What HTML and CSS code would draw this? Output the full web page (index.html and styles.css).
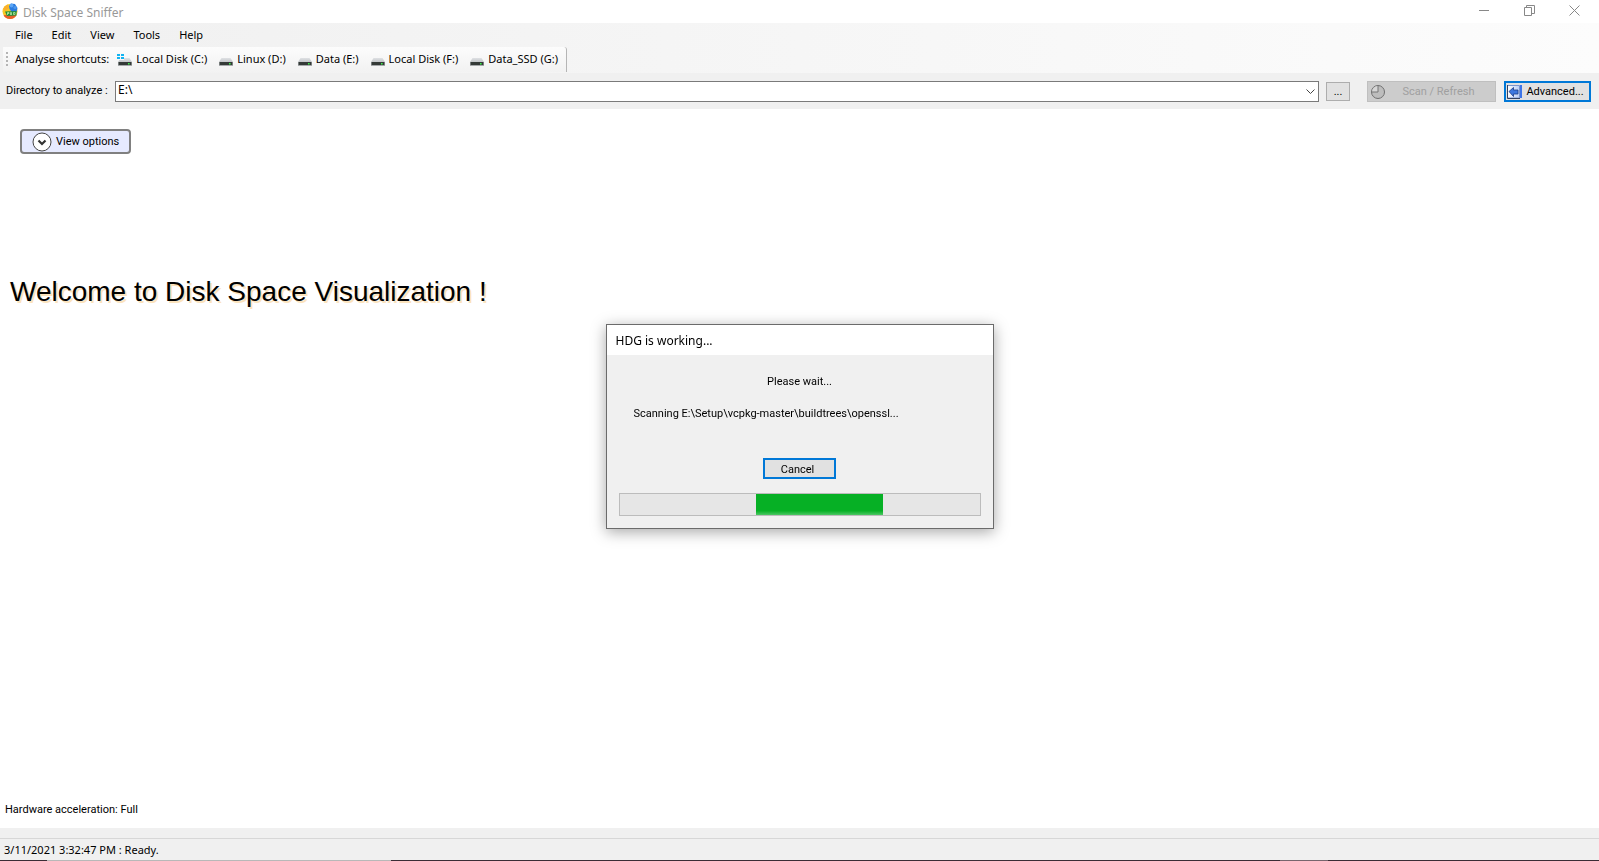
FILE: index.html
```html
<!DOCTYPE html>
<html lang="en">
<head>
    <meta charset="UTF-8">
    <title>Disk Space Sniffer</title>
    <link rel="stylesheet" href="styles.css">
</head>
<body>
    <svg class="defs" aria-hidden="true">
        <defs>
            <linearGradient id="lid" x1="0" y1="0" x2="0" y2="1">
                <stop offset="0" stop-color="#dfe1e4"/>
                <stop offset="1" stop-color="#c3c6c9"/>
            </linearGradient>
            <symbol id="drive" viewBox="0 0 14 14">
                <path d="M2.5 5h9L14 9H0z" fill="url(#lid)"/>
                <path d="M0 9h14v4H0z" fill="#a5a8aa"/>
                <path d="M.6 9h12.800v3H.6z" fill="#343a37"/>
                <path d="M10 10h1.600v1.400H10z" fill="#3cf04c"/>
            </symbol>
        </defs>
    </svg>
    <header class="titlebar">
        <svg class="logo" viewBox="0 0 16 16">
            <circle cx="8" cy="8.500" r="7.500" fill="#f8c822"/>
            <path d="M1 6a7.500 7.500 0 0 1 5-4.600L7 5 3 8z" fill="#fbb02a"/>
            <path d="M1.500 12.200L6 11.500l8.600.5a7.500 7.500 0 0 1-13.100.2z" fill="#e8602a"/>
            <path d="M7 3l2-2.500 4 .5 2.500 4-1 4.500H10L7.500 6z" fill="#2a7be0"/>
            <circle cx="9.500" cy="2.500" r="1.900" fill="#5ba5f5"/>
            <circle cx="13" cy="4.500" r="1.600" fill="#4b98ec"/>
            <path d="M3 8.500l11.500-.5v4.500L5 13z" fill="#218f38"/>
            <path d="M5.500 9.500v2.500m0-2.500H7v1H5.500m3 1.500V9.500h1v2.500m2-2.500H13v2h-1.500z" fill="none" stroke="#c5f0ae" stroke-width=".7"/>
        </svg>
        <h1 class="caption">Disk Space Sniffer</h1>
        <div class="window-buttons">
            <button type="button" aria-label="Minimize"><svg viewBox="0 0 11 11"><path d="M0 5.500h10"/></svg></button>
            <button type="button" aria-label="Restore"><svg viewBox="0 0 11 11"><path d="M.5 2.500h7v8h-7zM2.500 2.500v-2h8v8h-3"/></svg></button>
            <button type="button" aria-label="Close"><svg viewBox="0 0 11 11"><path d="M.5.500l10 10M10.500.500l-10 10"/></svg></button>
        </div>
    </header>

    <nav class="menu">
        <button type="button">File</button>
        <button type="button">Edit</button>
        <button type="button">View</button>
        <button type="button">Tools</button>
        <button type="button">Help</button>
    </nav>

    <div class="toolbar">
        <div class="shortcuts">
            <span class="grip"></span>
            <span class="shortcuts-label">Analyse shortcuts:</span>
            <button type="button">
                <svg viewBox="0 0 15 14"><use href="#drive" x="1" width="14" height="14"/><path d="M0 0h7v7H0z" fill="#f8f8f8"/><path d="M0 1h3v2H0zM4 1h3v2H4zM0 4h3v2H0zM4 4h3v2H4z" fill="#12b4f2"/></svg>
                Local Disk (C:)
            </button>
            <button type="button"><svg viewBox="0 0 14 14"><use href="#drive"/></svg>Linux (D:)</button>
            <button type="button"><svg viewBox="0 0 14 14"><use href="#drive"/></svg>Data (E:)</button>
            <button type="button"><svg viewBox="0 0 14 14"><use href="#drive"/></svg>Local Disk (F:)</button>
            <button type="button"><svg viewBox="0 0 14 14"><use href="#drive"/></svg>Data_SSD (G:)</button>
        </div>
    </div>

    <form class="address">
        <label for="directory">Directory to analyze :</label>
        <div class="combo">
            <select id="directory">
                <option>E:\</option>
            </select>
            <svg viewBox="0 0 9 6"><path d="M.5.500l4 4 4-4"/></svg>
        </div>
        <button type="button" class="btn browse">...</button>
        <button type="button" class="btn scan" disabled>
            <svg viewBox="0 0 16 16">
                <circle cx="8" cy="8" r="6.500" fill="#bdbdbd" stroke="#6f6f6f"/>
                <path d="M8 8V2a6 6 0 0 0-6 6z" fill="#d6d6d6"/>
                <path d="M8 2v6H2" fill="none" stroke="#777"/>
            </svg>
            <span>Scan / Refresh</span>
        </button>
        <button type="button" class="btn advanced">
            <svg viewBox="0 0 15 14">
                <defs>
                    <linearGradient id="panel">
                        <stop offset="0" stop-color="#ffffff"/>
                        <stop offset="1" stop-color="#b9cdf6"/>
                    </linearGradient>
                </defs>
                <path d="M.5.500h12v12.500H.5z" fill="url(#panel)" stroke="#7894ce"/>
                <path d="M.5 0v13.500H13" fill="none" stroke="#33415f"/>
                <path d="M13 0h2v13h-2z" fill="#3d75e8"/>
                <path d="M2 6.500L6.500 2.500V5H11v4H6.500v2.500z" fill="#3e78df" stroke="#1b3c87" stroke-width=".8"/>
            </svg>
            <span>Advanced...</span>
        </button>
    </form>

    <main class="view">
        <button type="button" class="options">
            <svg viewBox="0 0 20 20">
                <circle cx="10" cy="10" r="9" fill="#fff" stroke="#444"/>
                <path d="M6.500 8.500l3.500 3.500 3.500-3.500" fill="none" stroke="#333" stroke-width="2.200"/>
            </svg>
            View options
        </button>
        <h2 class="welcome">Welcome to Disk Space Visualization !</h2>
        <p class="hardware">Hardware acceleration: Full</p>
    </main>

    <footer class="status">3/11/2021 3:32:47 PM : Ready.</footer>

    <div class="overlay">
        <section class="dialog" role="dialog" aria-labelledby="dialog-title">
            <h3 id="dialog-title">HDG is working...</h3>
            <div class="dialog-body">
                <p class="wait">Please wait...</p>
                <p class="scanning">Scanning E:\Setup\vcpkg-master\buildtrees\openssl...</p>
                <button type="button" class="btn cancel">Cancel</button>
                <div class="progress" role="progressbar" aria-label="Scanning"><div class="marquee"></div></div>
            </div>
        </section>
    </div>
</body>
</html>
```
FILE: styles.css
```css
* {
    box-sizing: border-box;
    margin: 0;
    padding: 0;
}
body {
    display: flex;
    flex-direction: column;
    min-height: 100vh;
    background: #fff;
    color: #000;
    font: 11px/16px "Noto Sans", "Open Sans", sans-serif;
}
button, select {
    font: inherit;
    color: inherit;
}
button {
    border: 0;
    background: none;
    white-space: nowrap;
}
svg {
    flex: none;
}
.defs {
    position: absolute;
    width: 0;
    height: 0;
}

/* title bar */
.titlebar {
    display: flex;
    align-items: center;
    height: 23px;
    padding: 0 2px;
    color: #999;
}
.logo {
    width: 16px;
    height: 16px;
    margin-bottom: 2px;
}
.caption {
    flex: 1;
    padding: 2px 0 0 5px;
    font-size: 12px;
    font-weight: normal;
}
.window-buttons {
    display: flex;
    align-self: flex-start;
}
.window-buttons button {
    display: flex;
    align-items: center;
    justify-content: center;
    width: 45px;
    height: 21px;
}
.window-buttons svg {
    width: 11px;
    height: 11px;
    fill: none;
    stroke: #888;
}

/* menu */
.menu {
    display: flex;
    height: 24px;
    padding-left: 5px;
    background: linear-gradient(to right, #f0f0f0, #fcfcfc);
}
.menu button {
    padding: 0 9px 0 10px;
}

/* shortcuts */
.toolbar {
    height: 26px;
    padding-left: 3px;
    background: linear-gradient(to right, #f0f0f0, #fcfcfc);
}
.shortcuts {
    display: flex;
    align-items: center;
    width: max-content;
    height: 25px;
    padding: 0 8px 1px 3px;
    border-right: 1px solid #b5b5b5;
    border-radius: 0 3px 0 0;
    background: linear-gradient(#fcfcfc, #f2f2f2);
}
.grip {
    width: 2px;
    height: 15px;
    margin-right: 7px;
    background: repeating-linear-gradient(#b4b4b4 0 2px, transparent 2px 4px);
}
.shortcuts-label {
    margin-right: 8px;
}
.shortcuts button {
    display: flex;
    align-items: center;
    gap: 4px;
    margin-right: 12px;
}
.shortcuts button:last-child {
    margin-right: 0;
}
.shortcuts svg {
    height: 14px;
    margin-top: 2px;
}

/* address row */
.address {
    display: flex;
    align-items: center;
    height: 36px;
    padding: 0 8px 0 6px;
    background: #f0f0f0;
    font: 11px/14px Roboto, "Liberation Sans", sans-serif;
}
.address label {
    width: 109px;
}
.combo {
    position: relative;
    flex: 1;
    margin-right: 7px;
}
.combo select {
    display: block;
    width: 100%;
    height: 21px;
    padding: 0 2px 2px;
    border: 1px solid #7a7a7a;
    border-radius: 0;
    background: #fff;
    appearance: none;
    font: 12px/16px "Noto Sans", "Open Sans", sans-serif;
}
.combo svg {
    position: absolute;
    top: 8px;
    right: 4px;
    width: 9px;
    height: 6px;
    fill: none;
    stroke: #444;
    pointer-events: none;
}
.btn {
    display: flex;
    align-items: center;
    justify-content: center;
    height: 21px;
    padding-top: 1px;
    border: 1px solid #adadad;
    background: #e1e1e1;
}
.browse {
    width: 24px;
    height: 19px;
    margin-right: 17px;
}
.scan {
    width: 129px;
    margin-right: 8px;
    padding: 1px 4px 0 2px;
    border-color: #bfbfbf;
    background: #ccc;
    color: #a0a0a0;
}
.scan svg {
    width: 16px;
    height: 16px;
}
.scan span {
    flex: 1;
}
.advanced {
    width: 87px;
    padding-right: 4px;
    border: 2px solid #0078d7;
}
.advanced svg {
    width: 15px;
    height: 14px;
    margin-right: 4px;
}

/* content */
.view {
    display: flex;
    flex: 1;
    flex-direction: column;
    align-items: flex-start;
    padding: 20px 5px 11px;
}
.options {
    display: flex;
    align-items: center;
    gap: 4px;
    height: 25px;
    margin-left: 15px;
    padding: 0 10px;
    border: 2px solid #808080;
    border-radius: 4px;
    background: #e6eaff;
    font: 11px/14px Roboto, "Liberation Sans", sans-serif;
}
.options svg {
    width: 20px;
    height: 20px;
}
.welcome {
    margin: 122px 0 0 5px;
    font: 28px/32px "Liberation Sans", Arial, sans-serif;
    text-shadow: 2px 2px 0 #fbe3bd;
}
.hardware {
    margin-top: auto;
    font: 11px/14px Roboto, "Liberation Sans", sans-serif;
}

/* status bar */
.status {
    height: 33px;
    padding: 14px 4px 0;
    border-bottom: 1px solid #3a2c35;
    background: linear-gradient(#f0f0f0 10px, #d7d7d7 10px 11px, #f0f0f0 11px);
    border-image: linear-gradient(to right, #3a2c35 3%, #b8b8b8 3% 24.500%, #3a2c35 24.500% 80%, #77656d 80% 83%, #3a2c35 83%) 1;
}

/* progress dialog */
.overlay {
    position: fixed;
    inset: 0;
    display: flex;
    align-items: center;
    justify-content: center;
    padding-bottom: 8px;
    pointer-events: none;
}
.dialog {
    width: 388px;
    border: 1px solid #6b6b6b;
    background: #f0f0f0;
    box-shadow: 0 3px 14px rgba(0, 0, 0, .35);
    pointer-events: auto;
}
.dialog h3 {
    height: 30px;
    padding-left: 9px;
    background: #fff;
    font-size: 12px;
    font-weight: normal;
    line-height: 31px;
}
.dialog-body {
    padding: 20px 12px 12px;
    font: 11px/14px Roboto, "Liberation Sans", sans-serif;
}
.wait {
    text-align: center;
}
.scanning {
    margin: 18px 15px 37px;
}
.cancel {
    width: 73px;
    margin: 0 auto 14px;
    padding: 2px 4px 0 0;
    border: 2px solid #0078d7;
}
.progress {
    height: 23px;
    border: 1px solid #bcbcbc;
    background: #e6e6e6;
}
.marquee {
    width: 127px;
    height: 100%;
    margin-left: 38%;
    background: linear-gradient(#06b025 80%, #4cc763);
}
```
